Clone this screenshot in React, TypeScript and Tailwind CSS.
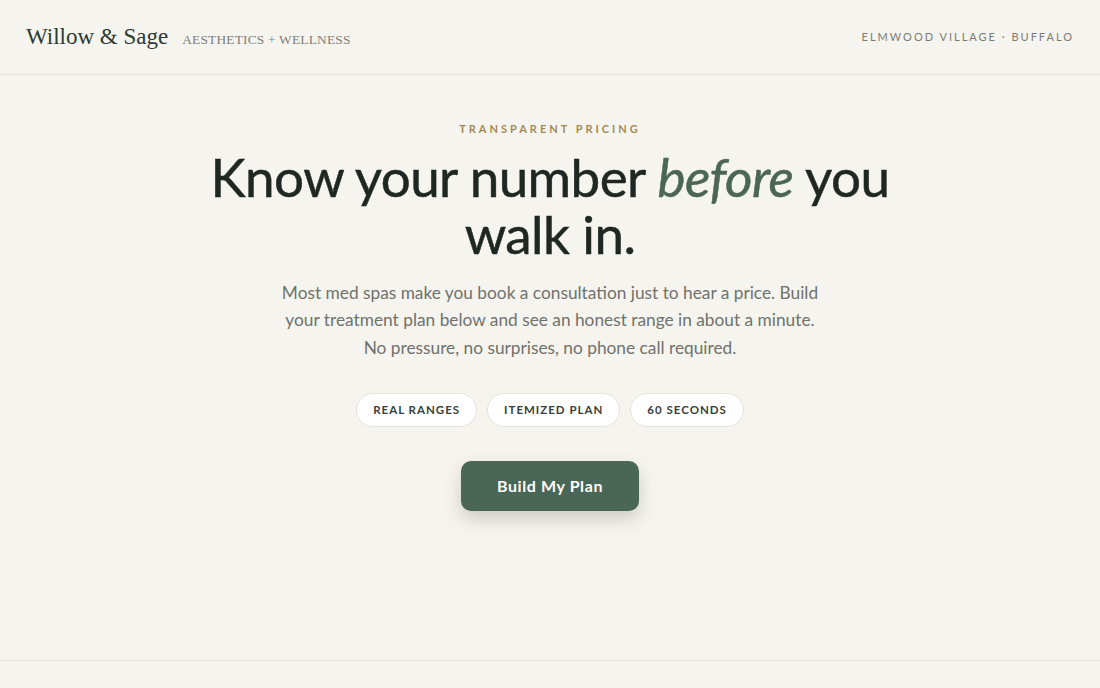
import React from "react";

export default function App() {
  const sans = { fontFamily: '"Lato", "Noto Sans", sans-serif' };
  return (
    <div className="min-h-[688px] w-full bg-[#f6f4ef] flex flex-col" style={sans}>
      <header className="h-[75px] border-b border-[#e6e2d8] flex items-center justify-between px-[26px]">
        <div className="flex items-baseline gap-[14px]">
          <span className="text-[23px] text-[#2c3a33] tracking-[0px]" style={{ fontFamily: '"Liberation Serif", serif' }}>Willow &amp; Sage</span>
          <span className="text-[13.4px] text-[#7d7f78] tracking-[0.2px]" style={{ fontFamily: '"Liberation Serif", serif' }}>AESTHETICS + WELLNESS</span>
        </div>
        <span className="text-[11px] tracking-[2px] text-[#7a7b74]">ELMWOOD VILLAGE · BUFFALO</span>
      </header>
      <main className="h-[586px] border-b border-[#e3dfd5] flex flex-col items-center">
        <div className="mt-[46px] text-[11px] font-bold tracking-[3px] text-[#a38a55]">TRANSPARENT PRICING</div>
        <h1 className="mt-[10px] text-center text-[53px] leading-[57px] text-[#1f2722] tracking-[-0.6px]" style={{ fontFamily: '"Lato", sans-serif', WebkitTextStroke: "0.5px #1f2722" }}>
          <span className="block">Know your number <em className="text-[#4b6657]" style={{ WebkitTextStroke: "0.5px #4b6657" }}>before</em> you</span>
          <span className="block">walk in.</span>
        </h1>
        <p className="mt-[17px] text-center text-[17.3px] leading-[27.5px] text-[#6f726b] whitespace-nowrap">
          Most med spas make you book a consultation just to hear a price. Build<br />your treatment plan below and see an honest range in about a minute.<br />No pressure, no surprises, no phone call required.
        </p>
        <div className="mt-[32px] flex gap-[10px]">
          {["REAL RANGES", "ITEMIZED PLAN", "60 SECONDS"].map((t) => (
            <span key={t} className="h-[34px] px-[16px] flex items-center rounded-full bg-white border border-[#e6e2d9] text-[11.5px] font-bold tracking-[1px] text-[#39403b]">
              {t}
            </span>
          ))}
        </div>
        <button className="mt-[34px] w-[178px] h-[50px] rounded-[10px] bg-[#4a6656] text-white text-[16px] font-bold tracking-[0.6px] shadow-[0_8px_18px_rgba(60,70,60,0.22)]">
          Build My Plan
        </button>
      </main>
      <div className="flex-1 h-[27px]"></div>
    </div>
  );
}
